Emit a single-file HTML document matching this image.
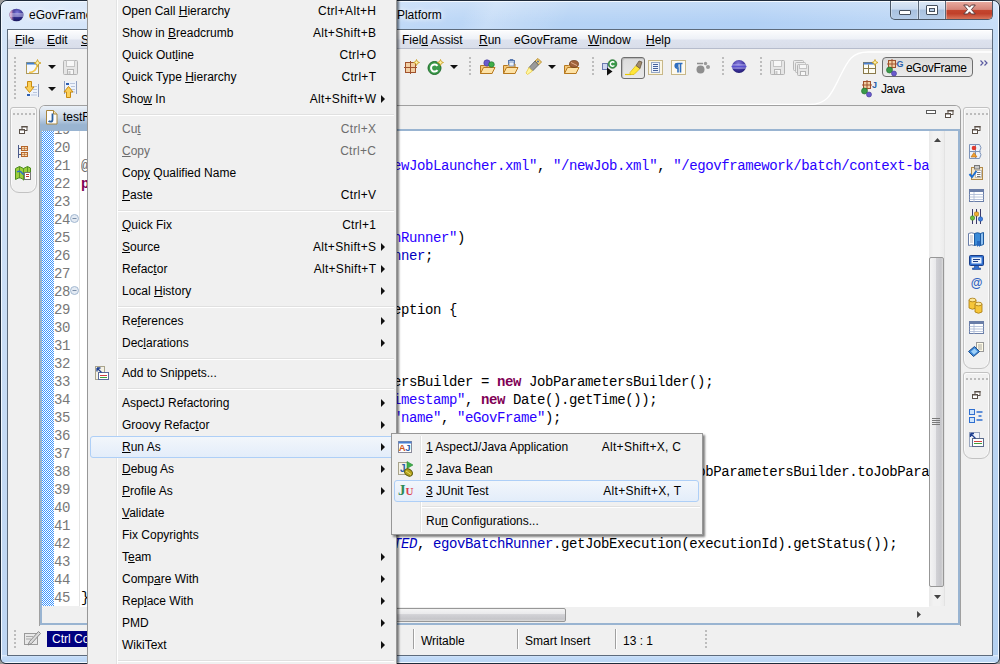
<!DOCTYPE html>
<html>
<head>
<meta charset="utf-8">
<title>eGovFrame - Eclipse Platform</title>
<style>
*{box-sizing:border-box;margin:0;padding:0}
html,body{width:1000px;height:664px;overflow:hidden;background:#9a9a9a}
body{font-family:"Liberation Sans",sans-serif;font-size:12px;color:#000;position:relative}
.abs{position:absolute}
u{text-decoration:underline;text-underline-offset:1px}
/* window frame */
#win{position:absolute;left:0;top:0;width:1000px;height:664px;border-radius:7px 7px 6px 6px;border:1px solid #1e2a3a;
 background:linear-gradient(180deg,rgba(255,255,255,.25) 0,rgba(255,255,255,0) 22px),linear-gradient(115deg,rgba(255,255,255,0) 425px,rgba(255,255,255,.22) 450px,rgba(255,255,255,.08) 500px,rgba(255,255,255,0) 520px),linear-gradient(90deg,#dbe9fa 0%,#d3e4f9 10%,#c0d9f7 40%,#b6d3f5 52%,#b1d0f5 75%,#bdd7f6 92%,#c9dff8 100%);overflow:hidden}
#win:before{content:"";position:absolute;left:0;top:0;right:0;bottom:0;border-radius:6px;border:1px solid #f2f8ff}
#botglow{position:absolute;left:1px;right:1px;bottom:1px;height:7px;background:linear-gradient(180deg,#e4effb 0,#c3dbf7 2px,#bbd6f5 100%)}
#sideL{position:absolute;left:1px;top:29px;width:6px;bottom:8px;background:linear-gradient(180deg,#d3e4f8,#bdd5f2)}
#sideR{position:absolute;right:1px;top:29px;width:6px;bottom:8px;background:linear-gradient(180deg,#c4dcf6,#b4d0f0)}
#title{position:absolute;left:29px;top:7px;font-size:12px;line-height:16px;white-space:nowrap;text-shadow:0 0 5px #fff,0 0 8px #fff}
#client{position:absolute;left:7px;top:29px;width:986px;height:627px;border:1px solid #5d6b7c;background:#f0f0f0;overflow:hidden}
#stage{position:absolute;left:0;top:0;width:1000px;height:664px;overflow:hidden}
#menubar{position:absolute;left:8px;top:30px;width:984px;height:19px;background:linear-gradient(180deg,#fbfcfd 0%,#eef1f7 45%,#dde2ee 55%,#d9deea 100%);border-top:1px solid #fff;border-bottom:1px solid #b6bccc}
#menubar span{position:absolute;top:1px;line-height:16px;white-space:nowrap}
/* caption buttons */
#caps{position:absolute;left:890px;top:1px;width:103px;height:19px;border:1px solid #4b5766;border-top:none;border-radius:0 0 5px 5px;overflow:hidden;
 background:linear-gradient(180deg,#dde9f6 0%,#c9daef 45%,#a9c1df 50%,#b5cce8 100%)}
#caps .c{position:absolute;top:0;height:18px;box-shadow:inset 0 1px 0 rgba(255,255,255,.9),inset 1px 0 0 rgba(255,255,255,.35),inset -1px 0 0 rgba(255,255,255,.35)}
#cmin{left:0;width:28px;border-right:1px solid #5b6777}
#cmax{left:28px;width:27px;border-right:1px solid #5b6777}
#cclose{left:55px;width:48px;background:linear-gradient(180deg,#eaaea3 0%,#d58579 47%,#c4452e 50%,#c0402a 70%,#d8745a 100%)}
/* toolbar */
.hdl{position:absolute;width:2px;background-image:repeating-linear-gradient(180deg,#bdbdbd 0,#bdbdbd 2px,transparent 2px,transparent 4px)}
.dd{position:absolute;width:0;height:0;border-left:4px solid transparent;border-right:4px solid transparent;border-top:4px solid #111}
svg{position:absolute;overflow:visible}
/* editor */
#edframe{position:absolute;left:39px;top:105px;width:922px;height:521px;border:1px solid #a0a0a0;border-radius:6px 6px 0 0;border-bottom:none}
#tabstrip{position:absolute;left:40px;top:106px;width:920px;height:23px;background:#f0f0f0;border-radius:5px 5px 0 0}
#tab{position:absolute;left:40px;top:106px;width:200px;height:25px;border-radius:5px 0 0 0;background:linear-gradient(180deg,#eaf0f7 0%,#c9d7e7 45%,#99b4d1 75%,#99b4d1 100%)}
#edblue{position:absolute;left:40px;top:129px;width:920px;height:496px;border:2px solid #99b4d1;background:#fff}
#ruler{position:absolute;left:42px;top:131px;width:12px;height:475px;background-color:#fff;
 background-image:conic-gradient(#3d95ff 25%,#fff 0 50%,#3d95ff 0 75%,#fff 0);background-size:2px 2px}
#lnums{position:absolute;left:54px;top:121px;width:24px;color:#787878}
#code,#lnums{font-family:"Liberation Mono",monospace;font-size:14px;letter-spacing:-0.4px;line-height:18px;white-space:pre}
#lnums{clip-path:inset(10px 0 0 0)}
#lnsep{position:absolute;left:79px;top:131px;width:1px;height:475px;background:#e4e4e4}
#code{position:absolute;left:81px;top:121px;width:848px;height:486px;overflow:hidden;clip-path:inset(10px 0 0 0);color:#000}
#code div{height:18px}
.s{color:#2a00ff}.k{color:#7f0055;font-weight:bold}.a{color:#646464}.f{color:#0000c0;font-style:italic}.fd{color:#0000c0}
/* scrollbars */
#vsb{position:absolute;left:929px;top:131px;width:16px;height:475px;background:linear-gradient(90deg,#e9e9e9,#f2f2f2 30%,#f2f2f2 70%,#ececec);border-right:1px solid #e3e3e3}
#vthumb{position:absolute;left:929px;top:257px;width:15px;height:330px;border:1px solid #979797;border-radius:2px;background:linear-gradient(90deg,#f4f4f4 0%,#e9e9eb 44%,#d2d2d6 46%,#c6c6ca 85%,#dcdcdc 100%)}
#ovr{position:absolute;left:945px;top:131px;width:13px;height:492px;background:#f0f0f0}
#hsb{position:absolute;left:42px;top:607px;width:887px;height:16px;background:#f0f0f0}
#hthumb{position:absolute;left:100px;top:608px;width:466px;height:14px;border:1px solid #979797;border-radius:2px;background:linear-gradient(180deg,#f4f4f4 0%,#e9e9eb 44%,#d2d2d6 46%,#c6c6ca 85%,#dcdcdc 100%)}
/* trims */
.trim{position:absolute;border:1px solid #c2c2c2;border-radius:3px 3px 9px 9px;background:#f0f0f0;box-shadow:inset 1px 1px 0 #fbfbfb,inset -1px 0 0 #fbfbfb}
.tdots{position:absolute;height:2px;background-image:repeating-linear-gradient(90deg,#bcbcbc 0,#bcbcbc 2px,transparent 2px,transparent 4px)}
/* status */
.ssep{position:absolute;top:629px;width:1px;height:20px;background:#a0a0a0;border-right:1px solid #fff;width:2px}
.stx{position:absolute;top:633px;line-height:16px;white-space:nowrap}
/* menus */
.menu{position:absolute;background:#f0f0f0;border:1px solid #979797;box-shadow:2px 2px 2px rgba(0,0,0,.5)}
.menu .gut{position:absolute;top:0;bottom:0;width:2px;border-left:1px solid #e2e3e3;border-right:1px solid #fff}
.mi{position:absolute;height:22px;line-height:22px;white-space:nowrap}
.mi .l{position:absolute;left:0;top:0}
.mi .r{position:absolute;right:0;top:0;letter-spacing:.3px;margin-right:-.3px}
.dis{color:#6d6d6d}
.msep{position:absolute;height:2px;border-top:1px solid #e0e0e0;border-bottom:1px solid #fff}
.arr{position:absolute;width:0;height:0;border-top:4px solid transparent;border-bottom:4px solid transparent;border-left:4px solid #111}
.hl{position:absolute;border:1px solid #aecff7;border-radius:3px;background:linear-gradient(180deg,#f2f6fb 0%,#e3edfa 100%)}
</style>
</head>
<body>
<div id="win">
 <div id="sideL"></div><div id="sideR"></div><div id="botglow"></div>
</div>
<div id="stage">
 <svg style="left:9px;top:8px" width="15" height="14" viewBox="0 0 15 14"><defs><radialGradient id="ec" cx=".55" cy=".3" r=".8"><stop offset="0" stop-color="#7f78d8"/><stop offset=".55" stop-color="#2c2a86"/><stop offset="1" stop-color="#15134e"/></radialGradient><linearGradient id="ep" x1="0" x2="1"><stop offset="0" stop-color="#f0b6cf"/><stop offset=".15" stop-color="#d99ac0" stop-opacity=".8"/><stop offset=".38" stop-color="#2c2a86" stop-opacity="0"/></linearGradient></defs><ellipse cx="7.500" cy="7" rx="7" ry="6.300" fill="url(#ec)"/><ellipse cx="7.500" cy="7" rx="7" ry="6.300" fill="url(#ep)"/><path d="M1 6h13.500M1 8h13.500" stroke="#d9d6f6" stroke-width=".9"/></svg>
 <div id="title" style="word-spacing:.36px">eGovFrame - egov-batch-web/src/test/java/testRunner.java - Eclipse Platform</div>
 <div id="caps"><div class="c" id="cmin"></div><div class="c" id="cmax"></div><div class="c" id="cclose"></div></div>
 <div class="abs" style="left:899px;top:10px;width:12px;height:5px;border:1px solid #46505e;background:#fff;border-radius:1px"></div>
 <div class="abs" style="left:926px;top:5px;width:12px;height:10px;border:1px solid #46505e;background:#fff;border-radius:1px"></div>
 <div class="abs" style="left:929px;top:8px;width:6px;height:4px;border:1px solid #46505e;background:#b9cde6"></div>
 <svg style="left:963px;top:4px" width="13" height="11" viewBox="0 0 13 11"><path d="M0.700 1h3.900l1.900 2.200l1.900-2.200h3.900l-3.850 4.500l3.850 4.500h-3.900l-1.900-2.200l-1.900 2.200h-3.900l3.850-4.500z" fill="#fff" stroke="#5a3a3a" stroke-width="1"/></svg>
 <div id="client"></div>
 <div id="menubar">
  <span style="left:7px"><u>F</u>ile</span>
  <span style="left:39px"><u>E</u>dit</span>
  <span style="left:73px"><u>S</u>ource</span>
  <span style="left:125px">Refac<u>t</u>or</span>
  <span style="left:185px"><u>N</u>avigate</span>
  <span style="left:247px">Se<u>a</u>rch</span>
  <span style="left:299px"><u>P</u>roject</span>
  <span style="left:394px">Fiel<u>d</u> Assist</span>
  <span style="left:471px"><u>R</u>un</span>
  <span style="left:506px">eGovFrame</span>
  <span style="left:580px"><u>W</u>indow</span>
  <span style="left:638px"><u>H</u>elp</span>
 </div>
 <!-- toolbar row 1 -->
 <div class="hdl" style="left:14px;top:57px;height:44px"></div>
 <svg style="left:25px;top:59px" width="17" height="16" viewBox="0 0 17 16"><rect x="1.500" y="3.500" width="12" height="11" fill="#f3f8ff" stroke="#b09a5a"/><rect x="1.500" y="3.500" width="12" height="2" fill="#3f7fd0"/><path d="M4 13.500q7 0 8.500-8" stroke="#f3c64a" stroke-width="1.500" fill="none"/><path d="M12.500 0.500l1 2.500l2.500 1l-2.500 1l-1 2.500l-1-2.500l-2.500-1l2.500-1z" fill="#fff3a8" stroke="#c99a1a" stroke-width=".8"/></svg>
 <div class="dd" style="left:48px;top:65px"></div>
 <svg style="left:63px;top:60px" width="16" height="16" viewBox="0 0 16 16"><rect x="0.500" y="0.500" width="14" height="14" rx="1" fill="#e6e6e6" stroke="#b4b4b4"/><rect x="3.500" y="0.500" width="8" height="6" fill="#f7f7f7" stroke="#c4c4c4"/><rect x="4.500" y="9.500" width="6" height="5" fill="#f7f7f7" stroke="#b4b4b4"/><rect x="5.500" y="11" width="2" height="3" fill="#c9c9c9"/></svg>
 <svg style="left:24px;top:81px" width="17" height="17" viewBox="0 0 17 17"><rect x="2.500" y="3.500" width="12" height="12" fill="#eef3fb" stroke="none"/><path d="M14.500 3v13" stroke="#8f9fc0"/><path d="M9 5.500h4M9 8.500h4M9 11.500h4M7 14h6" stroke="#b9c5dd"/><rect x="3" y="13" width="3" height="2" fill="#2f5fb0"/><path d="M3.500 0.500h4v5.500h2.500l-4.500 5.500l-4.500-5.500h2.500z" fill="#fbd05a" stroke="#c98a10"/></svg>
 <div class="dd" style="left:48px;top:87px"></div>
 <svg style="left:62px;top:81px" width="17" height="17" viewBox="0 0 17 17"><rect x="2.500" y="0.500" width="12" height="12" fill="#eef3fb" stroke="none"/><path d="M2.500 0v13M14.500 0v13" stroke="#8f9fc0"/><path d="M8 2.500h5M9 5.500h4M9 8.500h4M9 11h4" stroke="#b9c5dd"/><rect x="4" y="2" width="3" height="2" fill="#2f5fb0"/><path d="M4.500 16.500h4v-5.500h2.500l-4.500-5.500l-4.500 5.500h2.500z" fill="#fbd05a" stroke="#c98a10"/></svg>
 <!-- right of menu -->
 <svg style="left:404px;top:59px" width="16" height="16" viewBox="0 0 16 16"><rect x="1.500" y="3.500" width="10" height="10" fill="#f2cfa4" stroke="#a0522d"/><path d="M6.500 2v13M0 8.500h13" stroke="#a0522d"/><path d="M12.500 0.500l.9 2.100l2.100.9l-2.100.9l-.9 2.100l-.9-2.100l-2.100-.9l2.100-.9z" fill="#fff3a8" stroke="#c99a1a" stroke-width=".8"/></svg>
 <svg style="left:427px;top:59px" width="17" height="17" viewBox="0 0 17 17"><circle cx="7.500" cy="9" r="6.500" fill="#3a9a4a" stroke="#1f6a2a"/><path d="M10.500 6.800a3.600 3.600 0 1 0 0 4.400" fill="none" stroke="#fff" stroke-width="2"/><path d="M13.500 0.500l.9 2.100l2.100.9l-2.100.9l-.9 2.100l-.9-2.100l-2.100-.9l2.100-.9z" fill="#fff3a8" stroke="#c99a1a" stroke-width=".8"/></svg>
 <div class="dd" style="left:450px;top:65px"></div>
 <div class="hdl" style="left:469px;top:57px;height:20px"></div>
 <svg style="left:479px;top:59px" width="17" height="16" viewBox="0 0 17 16"><path d="M1.500 6.500h4l1.500-1.500h6v9.500h-11.500z" fill="#f4c777" stroke="#b7791f"/><path d="M1.500 14.500l3-6h11.500l-3 6z" fill="#fde2a6" stroke="#b7791f"/><circle cx="8" cy="4" r="3.200" fill="#6a5acd" stroke="#3f3790" stroke-width=".6"/><circle cx="12.500" cy="5.500" r="2.800" fill="#3fae49" stroke="#1f6a2a" stroke-width=".6"/></svg>
 <svg style="left:502px;top:59px" width="17" height="16" viewBox="0 0 17 16"><rect x="6.500" y="1.500" width="6" height="6" fill="#e8f0fb" stroke="#5a7ab0"/><path d="M8 1.500v-1h3v1" fill="none" stroke="#5a7ab0"/><path d="M1.500 6.500h4l1.500-1.500h6v9.500h-11.500z" fill="#f4c777" stroke="#b7791f"/><path d="M1.500 14.500l3-6h11.500l-3 6z" fill="#fde2a6" stroke="#b7791f"/><rect x="7" y="3" width="5" height="4" fill="#e8f0fb" stroke="#5a7ab0" stroke-width=".7"/></svg>
 <svg style="left:525px;top:58px" width="17" height="18" viewBox="0 0 17 18"><path d="M10 3l3-2.500l3.500 3.500l-3 3z" fill="#f6d27a" stroke="#a87a10" stroke-width=".8"/><path d="M10 3l3.500 4l-6 6l-3.500-3.500z" fill="#9a9a9a" stroke="#5a5a5a" stroke-width=".8"/><path d="M4 9.500l3.500 3.500l-5 3.500l-1.500-1.500z" fill="#fff6a0" stroke="#e8c840" stroke-width=".8"/><circle cx="13" cy="3.500" r=".9" fill="#2f5fb0"/></svg>
 <div class="dd" style="left:548px;top:65px"></div>
 <svg style="left:563px;top:59px" width="17" height="16" viewBox="0 0 17 16"><path d="M1.500 6.500h4l1.500-1.500h6v9.500h-11.500z" fill="#f4c777" stroke="#b7791f"/><path d="M1.500 14.500l3-6h11.500l-3 6z" fill="#fde2a6" stroke="#b7791f"/><ellipse cx="11" cy="5" rx="4.500" ry="3.500" fill="#a0623a" stroke="#6a3a1a" stroke-width=".7"/><path d="M8 3.500l6 3" stroke="#e0b090"/></svg>
 <div class="hdl" style="left:592px;top:57px;height:20px"></div>
 <svg style="left:601px;top:59px" width="17" height="17" viewBox="0 0 17 17"><rect x="1.500" y="4.500" width="5" height="6" fill="#cfd8f0" stroke="#6a7ab0"/><path d="M1 4.500h6" stroke="#6a7ab0"/><circle cx="11.500" cy="5" r="4.300" fill="#3a9a4a" stroke="#1f6a2a" stroke-width=".7"/><path d="M13.300 3.700a2.200 2.200 0 1 0 0 2.600" fill="none" stroke="#fff" stroke-width="1.400"/><path d="M6 8.500l5.500 4l-5.500 4z" fill="#111"/></svg>
 <div class="abs" style="left:621px;top:57px;width:24px;height:22px;border:1px solid #6e6e6e;border-radius:3px;background:linear-gradient(180deg,#dcdcdc,#e9e9e9);box-shadow:inset 1px 1px 1px rgba(0,0,0,.18)"></div>
 <svg style="left:624px;top:59px" width="19" height="18" viewBox="0 0 19 18"><path d="M1 15.500h6" stroke="#e8c800" stroke-width="1.200"/><path d="M6 13.500l6-7l4 3l-6 6h-4z" fill="#ffe63a" stroke="#d8b800" stroke-width=".7"/><path d="M12 6.500l3-4.500l3 1l-2 6.500z" fill="#a08a6a" stroke="#5a4a3a" stroke-width=".7"/></svg>
 <svg style="left:648px;top:60px" width="15" height="15" viewBox="0 0 15 15"><rect x="0.500" y="0.500" width="14" height="14" fill="#fbf6e4" stroke="#c8b888"/><rect x="3.500" y="2.500" width="8" height="10" fill="#eef3fc" stroke="#3a5a9a" stroke-dasharray="1 1"/><path d="M5 4.500h5M5 6.500h5M5 8.500h5M5 10.500h5" stroke="#2f4f90" stroke-width=".9"/></svg>
 <svg style="left:671px;top:60px" width="15" height="15" viewBox="0 0 15 15"><rect x="0.500" y="0.500" width="14" height="14" fill="#fdfaf0" stroke="#c8b888"/><path d="M11.500 3.500h-5a2.300 2.300 0 0 0 0 4.600h.5v4.400M9.500 3.500v9" stroke="#2f6fc0" stroke-width="1.600" fill="none"/><rect x="4.500" y="3.500" width="3" height="4" fill="#2f6fc0"/></svg>
 <svg style="left:695px;top:60px" width="16" height="15" viewBox="0 0 16 15"><circle cx="5.500" cy="9.500" r="4" fill="#8e8e8e"/><path d="M2 3.500h6" stroke="#8e8e8e" stroke-width="1.500"/><circle cx="10.500" cy="3.500" r="1.700" fill="#9a9a9a"/><circle cx="13" cy="7" r="2" fill="#9a9a9a"/></svg>
 <div class="hdl" style="left:722px;top:57px;height:20px"></div>
 <svg style="left:731px;top:59px" width="16" height="15" viewBox="0 0 16 15"><defs><radialGradient id="eb" cx=".45" cy=".3" r=".8"><stop offset="0" stop-color="#8a7fe0"/><stop offset=".6" stop-color="#3a2f9a"/><stop offset="1" stop-color="#1a1560"/></radialGradient></defs><ellipse cx="8" cy="7.500" rx="7" ry="6.500" fill="url(#eb)"/><path d="M1.200 6h13.600M1.200 9h13.600" stroke="#b9b4f4" stroke-width="1"/><path d="M0.500 7.500h15" stroke="#5a50d0" stroke-width="1.400"/></svg>
 <div class="hdl" style="left:760px;top:57px;height:20px"></div>
 <svg style="left:770px;top:60px" width="16" height="16" viewBox="0 0 16 16"><rect x="0.500" y="0.500" width="14" height="14" rx="1" fill="#e6e6e6" stroke="#b4b4b4"/><rect x="3.500" y="0.500" width="8" height="6" fill="#f7f7f7" stroke="#c4c4c4"/><rect x="4.500" y="9.500" width="6" height="5" fill="#f7f7f7" stroke="#b4b4b4"/><rect x="5.500" y="11" width="2" height="3" fill="#c9c9c9"/></svg>
 <svg style="left:793px;top:60px" width="17" height="17" viewBox="0 0 17 17"><rect x="0.500" y="0.500" width="10" height="10" rx="1" fill="#ececec" stroke="#b9b9b9"/><rect x="2.500" y="2.500" width="10" height="10" rx="1" fill="#ececec" stroke="#b9b9b9"/><rect x="4.500" y="4.500" width="11" height="11" rx="1" fill="#e6e6e6" stroke="#b4b4b4"/><rect x="6.500" y="4.500" width="7" height="4" fill="#f7f7f7" stroke="#c4c4c4"/><rect x="7.500" y="11.500" width="5" height="4" fill="#f7f7f7" stroke="#b4b4b4"/></svg>
 <!-- perspective switcher -->
 <svg style="left:640px;top:50px" width="352" height="56" viewBox="0 0 352 56"><path d="M0 54.500h170c18 0 22-12 30-28s12-24.500 28-24.500h124" fill="none" stroke="#fff" stroke-width="1.300"/></svg>
 <svg style="left:862px;top:59px" width="17" height="16" viewBox="0 0 17 16"><rect x="1.500" y="3.500" width="12" height="11" fill="#fdfdf4" stroke="#8a7a4a"/><rect x="1.500" y="3.500" width="12" height="2" fill="#4a7fd0"/><path d="M1.500 9.500h12M6.500 5.500v9" stroke="#8a7a4a"/><path d="M13 0.500l.9 2.100l2.100.9l-2.100.9l-.9 2.100l-.9-2.100l-2.100-.9l2.100-.9z" fill="#fff3a8" stroke="#c99a1a" stroke-width=".8"/></svg>
 <div class="abs" style="left:882px;top:57px;width:91px;height:20px;border:1px solid #6e6e6e;border-radius:4px;background:linear-gradient(180deg,#dadada,#ececec)"></div>
 <svg style="left:885px;top:59px" width="19" height="18" viewBox="0 0 19 18"><rect x="3.500" y="1.500" width="7" height="7" fill="#f2cfa4" stroke="#a0522d"/><path d="M7 0v10M2 5h10" stroke="#a0522d"/><circle cx="4.500" cy="11" r="3" fill="#3a9a4a" stroke="#1f6a2a" stroke-width=".6"/><circle cx="9" cy="14.500" r="2.500" fill="#6a5acd" stroke="#3f3790" stroke-width=".6"/><text x="11.500" y="8" font-family="Liberation Sans,sans-serif" font-weight="bold" font-size="9" fill="#2a5fa8">G</text></svg>
 <div class="abs" style="left:906px;top:60px;line-height:16px;white-space:nowrap;letter-spacing:-.3px">eGovFrame</div>
 <svg style="left:980px;top:60px" width="8" height="6" viewBox="0 0 8 6"><path d="M0.500 0.500l2.500 2.500l-2.500 2.500M4.500 0.500l2.500 2.500l-2.500 2.500" fill="none" stroke="#5a5aa0" stroke-width="1.200"/></svg>
 <svg style="left:860px;top:80px" width="19" height="18" viewBox="0 0 19 18"><rect x="3.500" y="1.500" width="7" height="7" fill="#f2cfa4" stroke="#a0522d"/><path d="M7 0v10M2 5h10" stroke="#a0522d"/><circle cx="4.500" cy="11" r="3" fill="#3a9a4a" stroke="#1f6a2a" stroke-width=".6"/><circle cx="9" cy="14.500" r="2.500" fill="#6a5acd" stroke="#3f3790" stroke-width=".6"/><text x="12" y="8" font-family="Liberation Sans,sans-serif" font-weight="bold" font-size="9" fill="#2a5fa8">J</text></svg>
 <div class="abs" style="left:881px;top:81px;line-height:16px;white-space:nowrap;letter-spacing:-.5px">Java</div>
 <div id="edframe"></div>
 <div id="tabstrip"></div>
 <div id="tab"></div>
 <div id="edblue"></div>
 <svg style="left:46px;top:110px" width="12" height="15" viewBox="0 0 12 15"><path d="M0.5 0.5h7l3.5 3.5v10h-10.5z" fill="#fdfdfd" stroke="#a8863e"/><path d="M7.5 0.5v3.5h3.5" fill="#f3e3b5" stroke="#a8863e"/><path d="M6.5 3.5v6.2q0 2-2 2q-1.2 0-1.8-.8" fill="none" stroke="#2b5f9e" stroke-width="1.8"/></svg>
 <div class="abs" style="left:63px;top:109px;line-height:16px;white-space:nowrap">testRunner.java</div>
 <div class="abs" style="left:158px;top:109px;line-height:16px;color:#333">&#x2715;</div>
 <!-- min / max of editor -->
 <div class="abs" style="left:926px;top:110px;width:10px;height:4px;border:1px solid #5a5a5a;background:#fff"></div>
 <svg style="left:945px;top:110px" width="9" height="8" viewBox="0 0 9 8"><rect x="3" y="0.500" width="5" height="4" fill="#fff" stroke="#5a5048"/><rect x="2.500" y="0" width="6" height="1.500" fill="#5a5048"/><rect x="0.500" y="3.500" width="5" height="4" fill="#fff" stroke="#5a5048"/><rect x="0" y="3" width="6" height="1.500" fill="#5a5048"/></svg>
 <div id="ruler"></div>
 <div id="lnums">19
20
21
22
23
24
25
26
27
28
29
30
31
32
33
34
35
36
37
38
39
40
41
42
43
44
45</div>
 <div id="lnsep"></div>
 <div id="code"><div> </div><div> </div><div><span class="a">@ContextConfiguration</span>(locations = { <span class="s">"/newJobLauncher.xml"</span>, <span class="s">"/newJob.xml"</span>, <span class="s">"/egovframework/batch/context-batch-datasource.xml"</span> })</div><div><span class="k">public class</span> testRunner {</div><div> </div><div>    <span class="a">@Autowired</span></div><div>    <span class="a">@Qualifier</span>(value        = <span class="s">"egovBatchRunner"</span>)</div><div>    <span class="k">private</span> EgovBatchRunner <span class="fd">egovBatchRunner</span>;</div><div> </div><div>    <span class="a">@Test</span></div><div>    <span class="k">public void</span> testJobRun() <span class="k">throws</span> Exception {</div><div> </div><div> </div><div> </div><div>        JobParametersBuilder jobParametersBuilder = <span class="k">new</span> JobParametersBuilder();</div><div>        jobParametersBuilder.addLong(<span class="s">"timestamp"</span>, <span class="k">new</span> Date().getTime());</div><div>        jobParametersBuilder.addString(<span class="s">"name"</span>, <span class="s">"eGovFrame"</span>);</div><div> </div><div> </div><div>        <span class="k">long</span> executionId = <span class="fd">egovBatchRunner</span>.start(<span class="s">"batchLauncher"</span>, <span class="s">"newJob"</span>, jobParametersBuilder.toJobParameters());</div><div> </div><div> </div><div> </div><div>        assertEquals(BatchStatus.<span class="f">COMPLETED</span>, <span class="fd">egovBatchRunner</span>.getJobExecution(executionId).getStatus());</div><div> </div><div> </div><div>}</div></div>
 <!-- fold markers -->
 <svg style="left:70px;top:214px" width="9" height="9" viewBox="0 0 9 9"><circle cx="4.500" cy="4.500" r="4" fill="#e3eaf3" stroke="#a3b8d1"/><path d="M2.500 4.500h4" stroke="#7a8ea8"/></svg>
 <svg style="left:70px;top:286px" width="9" height="9" viewBox="0 0 9 9"><circle cx="4.500" cy="4.500" r="4" fill="#e3eaf3" stroke="#a3b8d1"/><path d="M2.500 4.500h4" stroke="#7a8ea8"/></svg>
 <div id="vsb"></div><div id="ovr"></div>
 <div id="vthumb"></div>
 <svg style="left:934px;top:138px" width="7" height="4" viewBox="0 0 9 5"><path d="M0 5L4.5 0L9 5z" fill="#444"/></svg>
 <svg style="left:934px;top:595px" width="7" height="4" viewBox="0 0 9 5"><path d="M0 0L4.5 5L9 0z" fill="#444"/></svg>
 <svg style="left:932px;top:418px" width="9" height="8" viewBox="0 0 9 8"><path d="M0 .5h8M0 2.5h8M0 4.5h8M0 6.5h8" stroke="#7a7a7a"/></svg>
 <div id="hsb"></div><div id="hthumb"></div>
 <svg style="left:917px;top:611px" width="4" height="7" viewBox="0 0 5 9"><path d="M0 0L5 4.5L0 9z" fill="#444"/></svg>
 <div class="abs" style="left:42px;top:606px;width:38px;height:17px;background:#f0f0f0"></div>
 <div class="abs" style="left:929px;top:606px;width:29px;height:17px;background:#f0f0f0"></div>
 <!-- left trim -->
 <div class="trim" style="left:10px;top:107px;width:27px;height:86px"></div>
 <div class="tdots" style="left:13px;top:113px;width:23px"></div>
 <svg style="left:19px;top:126px" width="9" height="8" viewBox="0 0 9 8"><rect x="3" y="0.500" width="5" height="4" fill="#fff" stroke="#5a5048"/><rect x="2.500" y="0" width="6" height="1.500" fill="#5a5048"/><rect x="0.500" y="3.500" width="5" height="4" fill="#fff" stroke="#5a5048"/><rect x="0" y="3" width="6" height="1.500" fill="#5a5048"/></svg>
 <svg style="left:17px;top:145px" width="12" height="14" viewBox="0 0 12 14"><path d="M1.5 0v13M1.5 3.5h3M1.5 9.5h3" stroke="#4a5a8a" fill="none"/><rect x="4.5" y="1.5" width="6" height="4" fill="#f7d9b0" stroke="#b5652a"/><rect x="4.5" y="7.5" width="6" height="4" fill="#f7d9b0" stroke="#b5652a"/><path d="M7.5 1.5v4M7.5 7.5v4M4.5 3.5h6M4.5 9.5h6" stroke="#b5652a" stroke-width=".6"/></svg>
 <svg style="left:15px;top:166px" width="16" height="15" viewBox="0 0 16 15"><path d="M0.5 2.5l4-2l4 2l4-2l3 1.5v11l-3-1.5l-4 2l-4-2l-4 2z" fill="#9ccf3c" stroke="#4b8a1d"/><path d="M4.5 .5v12M8.500 2.500v12M12.500 .5v12" stroke="#4b8a1d" stroke-width=".8"/><path d="M2 6q3-2 5 1t5 0" stroke="#2f6fc4" fill="none" stroke-width="1.4"/><rect x="9.500" y="6.500" width="6" height="7" fill="#fff" stroke="#777"/><path d="M11 8.500h3M11 10.500h3" stroke="#c0392b"/></svg>
 <!-- right trim 1 -->
 <div class="trim" style="left:963px;top:107px;width:27px;height:262px"></div>
 <div class="tdots" style="left:966px;top:113px;width:23px"></div>
 <svg style="left:972px;top:126px" width="9" height="8" viewBox="0 0 9 8"><rect x="3" y="0.500" width="5" height="4" fill="#fff" stroke="#5a5048"/><rect x="2.500" y="0" width="6" height="1.500" fill="#5a5048"/><rect x="0.500" y="3.500" width="5" height="4" fill="#fff" stroke="#5a5048"/><rect x="0" y="3" width="6" height="1.500" fill="#5a5048"/></svg>
 <svg style="left:969px;top:144px" width="15" height="15" viewBox="0 0 15 15"><path d="M0.500 0.500h10q3 3 0 7q3 3 0 7h-10z" fill="#eef3fb" stroke="#7d93b8"/><path d="M6.500 .5v14M.5 7.500h11" stroke="#7d93b8"/><circle cx="5" cy="4" r="2.300" fill="#e03c31"/><path d="M5 8.500l3 4.500h-6z" fill="#f0a030" stroke="#b86a10" stroke-width=".6"/></svg>
 <svg style="left:969px;top:165px" width="15" height="16" viewBox="0 0 15 16"><rect x="2.500" y="2.500" width="11" height="12" fill="#f6e7c8" stroke="#b08a4a"/><rect x="5.500" y="0.500" width="5" height="3.500" fill="#c9c9c9" stroke="#777"/><rect x="6.500" y="5.500" width="6" height="7" fill="#fff" stroke="#999" stroke-width=".6"/><path d="M8 7.500h3.500M8 9.500h3.500M8 11.500h3.500" stroke="#555" stroke-width=".8"/><path d="M0.500 9l2.500 3l4.500-6" stroke="#1f6fd0" stroke-width="2" fill="none"/></svg>
 <svg style="left:969px;top:189px" width="15" height="13" viewBox="0 0 15 13"><rect x="0.500" y="0.500" width="14" height="12" fill="#fff" stroke="#6a7ea8"/><rect x="0.500" y="0.500" width="14" height="2.500" fill="#6a7ea8"/><path d="M.5 5.500h14M.5 8h14M.5 10.500h14M5 3v10" stroke="#a9b7d3" stroke-width=".8"/></svg>
 <svg style="left:969px;top:209px" width="15" height="16" viewBox="0 0 15 16"><path d="M3.500 0v15M7.500 0v15M11.500 0v15" stroke="#3a3a6a"/><circle cx="3.500" cy="9" r="2.200" fill="#6cbf3c" stroke="#3d7e1d" stroke-width=".6"/><rect x="5.500" y="3" width="4" height="4" rx="1" fill="#f0b030" stroke="#a87010" stroke-width=".6"/><circle cx="11.500" cy="10" r="2.200" fill="#3f7fe0" stroke="#1d4fa0" stroke-width=".6"/></svg>
 <svg style="left:968px;top:232px" width="17" height="16" viewBox="0 0 17 16"><path d="M0.500 1.500q3-1.500 6 0v12q-3-1.500-6 0z" fill="#fff" stroke="#6a7ea8"/><path d="M6.500 1.500q3-1.500 6 0v12q-3-1.500-6 0z" fill="#3a8ad8" stroke="#1d5aa0"/><path d="M12.500 1.500l3-1v12l-3 1z" fill="#8fc0f0" stroke="#1d5aa0"/><path d="M2 4h3M2 6h3M2 8h3M2 10h3" stroke="#99a" stroke-width=".7"/><path d="M9 9v6l1.500-1.500l1.500 1.500v-6z" fill="#2468c0"/></svg>
 <svg style="left:969px;top:255px" width="15" height="15" viewBox="0 0 15 15"><rect x="0.500" y="0.500" width="14" height="10" rx="1" fill="#2f6fd0" stroke="#1a3f8a"/><rect x="2.500" y="2.500" width="10" height="6" fill="#e9f1fc"/><path d="M4 4.500h7M4 6.500h5" stroke="#1a3f8a"/><path d="M5.500 11v2h-2v1.500h8v-1.500h-2v-2" fill="#2f6fd0" stroke="#1a3f8a" stroke-width=".6"/></svg>
 <div class="abs" style="left:969px;top:275px;width:15px;text-align:center;font-weight:bold;font-size:12px;line-height:16px;color:#2f62c0">@</div>
 <svg style="left:968px;top:297px" width="17" height="17" viewBox="0 0 17 17"><g fill="#f6c63a" stroke="#a87a10" stroke-width=".8"><path d="M1 3v8q3.500 2.500 7 0v-8z"/><ellipse cx="4.500" cy="3" rx="3.500" ry="1.800" fill="#fde79a"/><path d="M7 7v8q3.500 2.500 7 0v-8z"/><ellipse cx="10.500" cy="7" rx="3.500" ry="1.800" fill="#fde79a"/></g></svg>
 <svg style="left:969px;top:321px" width="15" height="13" viewBox="0 0 15 13"><rect x="0.500" y="0.500" width="14" height="12" fill="#fff" stroke="#6a7ea8"/><rect x="0.500" y="0.500" width="14" height="2.500" fill="#6a7ea8"/><path d="M.5 5.500h14M.5 8h14M.5 10.500h14M5 3v10" stroke="#a9b7d3" stroke-width=".8"/></svg>
 <svg style="left:968px;top:342px" width="17" height="17" viewBox="0 0 17 17"><rect x="8.500" y="0.500" width="7" height="9" fill="#fffbe6" stroke="#999"/><path d="M10 3h4M10 5h4M10 7h4" stroke="#888" stroke-width=".7"/><path d="M0.500 9.500l6-5l5 5l-6 5z" fill="#3f8ad8" stroke="#1d4f90"/><path d="M3 9.500l3.500-3l3 3l-3.500 3z" fill="#9fd0f8"/></svg>
 <!-- right trim 2 -->
 <div class="trim" style="left:963px;top:372px;width:27px;height:87px"></div>
 <div class="tdots" style="left:966px;top:378px;width:23px"></div>
 <svg style="left:972px;top:391px" width="9" height="8" viewBox="0 0 9 8"><rect x="3" y="0.500" width="5" height="4" fill="#fff" stroke="#5a5048"/><rect x="2.500" y="0" width="6" height="1.500" fill="#5a5048"/><rect x="0.500" y="3.500" width="5" height="4" fill="#fff" stroke="#5a5048"/><rect x="0" y="3" width="6" height="1.500" fill="#5a5048"/></svg>
 <svg style="left:969px;top:409px" width="15" height="15" viewBox="0 0 15 15"><rect x="0.500" y="0.500" width="5" height="5" fill="#cfe4fa" stroke="#2f6fd0"/><rect x="0.500" y="8.500" width="5" height="5" fill="#cfe4fa" stroke="#2f6fd0"/><path d="M7.500 3h6M9.500 7h3M7.500 11h6" stroke="#2f6fd0" stroke-width="1.300"/></svg>
 <svg style="left:969px;top:432px" width="15" height="16" viewBox="0 0 15 16"><rect x="0.500" y="0.500" width="10" height="14" fill="#eef3fb" stroke="#9aa7c0"/><rect x="3.500" y="6.500" width="11" height="8" fill="#fff" stroke="#5a6a8a"/><path d="M5 9.500h8" stroke="#d04040"/><path d="M5 11.500h8" stroke="#40a040"/><path d="M1.500 1.500l5 5M1.500 1.500v3.500M1.500 1.500h3.500" stroke="#1d3f90" stroke-width="1.300" fill="none"/></svg>
 <div class="hdl" style="left:14px;top:630px;height:20px"></div>
 <svg style="left:24px;top:631px" width="17" height="16" viewBox="0 0 17 16"><rect x="0.500" y="2.500" width="13" height="11" fill="#e8e8e8" stroke="#9a9a9a"/><path d="M14.500 0.500l2 2l-9 10l-3.500 1.500l1.500-3.500z" fill="#d9d9d9" stroke="#8a8a8a"/><path d="M2 5.500h7M2 8h5" stroke="#aaa"/></svg>
 <div class="abs" style="left:47px;top:631px;width:300px;height:16px;background:#000080;color:#fff;line-height:16px;padding-left:5px;white-space:nowrap;overflow:hidden">Ctrl Contrib (Bottom)</div>
 <div class="ssep" style="left:413px"></div>
 <div class="ssep" style="left:517px"></div>
 <div class="ssep" style="left:615px"></div>
 <div class="stx" style="left:421px">Writable</div>
 <div class="stx" style="left:525px">Smart Insert</div>
 <div class="stx" style="left:623px">13 : 1</div>
 <div class="hdl" style="left:705px;top:630px;height:20px"></div>
 <div class="menu" style="left:87px;top:-12px;width:310px;height:700px">
  <div class="gut" style="left:28px"></div>
  <div class="mi" style="left:34px;top:11px;width:254px"><span class="l">Open Call <u>H</u>ierarchy</span><span class="r">Ctrl+Alt+H</span></div>
  <div class="mi" style="left:34px;top:33px;width:254px"><span class="l">Show in <u>B</u>readcrumb</span><span class="r">Alt+Shift+B</span></div>
  <div class="mi" style="left:34px;top:55px;width:254px"><span class="l">Quick Out<u>l</u>ine</span><span class="r">Ctrl+O</span></div>
  <div class="mi" style="left:34px;top:77px;width:254px"><span class="l">Quick Type <u>H</u>ierarchy</span><span class="r">Ctrl+T</span></div>
  <div class="mi" style="left:34px;top:99px;width:254px"><span class="l">Sho<u>w</u> In</span><span class="r">Alt+Shift+W</span></div>
  <div class="arr" style="left:293px;top:106px"></div>
  <div class="msep" style="left:30px;top:125px;width:276px"></div>
  <div class="mi dis" style="left:34px;top:129px;width:254px"><span class="l">Cu<u>t</u></span><span class="r">Ctrl+X</span></div>
  <div class="mi dis" style="left:34px;top:151px;width:254px"><span class="l"><u>C</u>opy</span><span class="r">Ctrl+C</span></div>
  <div class="mi" style="left:34px;top:173px;width:254px"><span class="l">Cop<u>y</u> Qualified Name</span><span class="r"></span></div>
  <div class="mi" style="left:34px;top:195px;width:254px"><span class="l"><u>P</u>aste</span><span class="r">Ctrl+V</span></div>
  <div class="msep" style="left:30px;top:221px;width:276px"></div>
  <div class="mi" style="left:34px;top:225px;width:254px"><span class="l"><u>Q</u>uick Fix</span><span class="r">Ctrl+1</span></div>
  <div class="mi" style="left:34px;top:247px;width:254px"><span class="l"><u>S</u>ource</span><span class="r">Alt+Shift+S</span></div>
  <div class="arr" style="left:293px;top:254px"></div>
  <div class="mi" style="left:34px;top:269px;width:254px"><span class="l">Refac<u>t</u>or</span><span class="r">Alt+Shift+T</span></div>
  <div class="arr" style="left:293px;top:276px"></div>
  <div class="mi" style="left:34px;top:291px;width:254px"><span class="l">Local <u>H</u>istory</span><span class="r"></span></div>
  <div class="arr" style="left:293px;top:298px"></div>
  <div class="msep" style="left:30px;top:317px;width:276px"></div>
  <div class="mi" style="left:34px;top:321px;width:254px"><span class="l">Re<u>f</u>erences</span><span class="r"></span></div>
  <div class="arr" style="left:293px;top:328px"></div>
  <div class="mi" style="left:34px;top:343px;width:254px"><span class="l">Dec<u>l</u>arations</span><span class="r"></span></div>
  <div class="arr" style="left:293px;top:350px"></div>
  <div class="msep" style="left:30px;top:369px;width:276px"></div>
  <div class="mi" style="left:34px;top:373px;width:254px"><span class="l">Add to Snippets...</span><span class="r"></span></div>
  <div class="msep" style="left:30px;top:399px;width:276px"></div>
  <div class="mi" style="left:34px;top:403px;width:254px"><span class="l">AspectJ Refactoring</span><span class="r"></span></div>
  <div class="arr" style="left:293px;top:410px"></div>
  <div class="mi" style="left:34px;top:425px;width:254px"><span class="l">Groovy Refac<u>t</u>or</span><span class="r"></span></div>
  <div class="arr" style="left:293px;top:432px"></div>
  <div class="hl" style="left:2px;top:447px;width:304px;height:22px"></div>
  <div class="mi" style="left:34px;top:447px;width:254px"><span class="l"><u>R</u>un As</span><span class="r"></span></div>
  <div class="arr" style="left:293px;top:454px"></div>
  <div class="mi" style="left:34px;top:469px;width:254px"><span class="l"><u>D</u>ebug As</span><span class="r"></span></div>
  <div class="arr" style="left:293px;top:476px"></div>
  <div class="mi" style="left:34px;top:491px;width:254px"><span class="l"><u>P</u>rofile As</span><span class="r"></span></div>
  <div class="arr" style="left:293px;top:498px"></div>
  <div class="mi" style="left:34px;top:513px;width:254px"><span class="l"><u>V</u>alidate</span><span class="r"></span></div>
  <div class="mi" style="left:34px;top:535px;width:254px"><span class="l">Fix Copyrights</span><span class="r"></span></div>
  <div class="mi" style="left:34px;top:557px;width:254px"><span class="l">T<u>e</u>am</span><span class="r"></span></div>
  <div class="arr" style="left:293px;top:564px"></div>
  <div class="mi" style="left:34px;top:579px;width:254px"><span class="l">Comp<u>a</u>re With</span><span class="r"></span></div>
  <div class="arr" style="left:293px;top:586px"></div>
  <div class="mi" style="left:34px;top:601px;width:254px"><span class="l">Rep<u>l</u>ace With</span><span class="r"></span></div>
  <div class="arr" style="left:293px;top:608px"></div>
  <div class="mi" style="left:34px;top:623px;width:254px"><span class="l">PMD</span><span class="r"></span></div>
  <div class="arr" style="left:293px;top:630px"></div>
  <div class="mi" style="left:34px;top:645px;width:254px"><span class="l">WikiText</span><span class="r"></span></div>
  <div class="arr" style="left:293px;top:652px"></div>
  <div class="msep" style="left:30px;top:671px;width:276px"></div>
  <svg style="left:7px;top:377px" width="14" height="15" viewBox="0 0 14 15"><rect x="0.500" y="0.500" width="9" height="13" fill="#f4f1e4" stroke="#a9a48c"/><rect x="3.500" y="6.500" width="10" height="7" fill="#fff" stroke="#5a6a9a"/><path d="M5 9.500h7" stroke="#d04040"/><path d="M5 11.500h7" stroke="#40a040"/><path d="M2 2l4.500 4.500M2 2v3.500M2 2h3.500" stroke="#1d3f90" stroke-width="1.300" fill="none"/></svg>
 </div>
 <div class="menu" style="left:391px;top:433px;width:312px;height:102px">
  <div class="gut" style="left:28px;top:2px;bottom:2px"></div>
  <div class="hl" style="left:2px;top:46px;width:305px;height:22px"></div>
  <div class="mi" style="left:34px;top:2px;width:255px"><span class="l"><u>1</u> AspectJ/Java Application</span><span class="r">Alt+Shift+X, C</span></div>
  <div class="mi" style="left:34px;top:24px;width:255px"><span class="l"><u>2</u> Java Bean</span><span class="r"></span></div>
  <div class="mi" style="left:34px;top:46px;width:255px"><span class="l"><u>3</u> JUnit Test</span><span class="r">Alt+Shift+X, T</span></div>
  <div class="mi" style="left:34px;top:76px;width:255px"><span class="l">Ru<u>n</u> Configurations...</span><span class="r"></span></div>
  <div class="msep" style="left:30px;top:72px;width:278px"></div>
  <svg style="left:6px;top:7px" width="14" height="12" viewBox="0 0 14 12"><rect x="0.500" y="0.500" width="13" height="11" fill="#fff" stroke="#8a8a9a"/><rect x="0.500" y="0.500" width="13" height="2" fill="#4a7fd0"/><text x="0.800" y="10.300" font-family="Liberation Sans,sans-serif" font-weight="bold" font-size="9.500" fill="#d0561a">A</text><text x="7.300" y="10.300" font-family="Liberation Sans,sans-serif" font-weight="bold" font-size="9.500" fill="#2a5fa8">J</text></svg>
  <svg style="left:6px;top:27px" width="16" height="16" viewBox="0 0 16 16"><rect x="0.500" y="1.500" width="9" height="12" fill="#f4f1e4" stroke="#a9a48c"/><text x="2" y="11" font-family="Liberation Sans,sans-serif" font-weight="bold" font-size="10" fill="#2a5fa8">J</text><path d="M9 0.500l6 3.500l-6 3.500z" fill="#3fae49" stroke="#2a8a35" stroke-width=".6"/><ellipse cx="10.500" cy="11.500" rx="4.300" ry="3.300" transform="rotate(35 10.500 11.500)" fill="#b5a21a" stroke="#5a5a10"/><path d="M8 10l5 3.500" stroke="#e8e06a"/></svg>
  <div class="abs" style="left:6px;top:48px;font-family:'Liberation Serif',serif;font-weight:bold;line-height:16px;white-space:nowrap"><span style="font-size:15px;color:#2e8b57">J</span><span style="font-size:11px;color:#dc3c50">U</span></div>
 </div>
</div>
</body>
</html>
